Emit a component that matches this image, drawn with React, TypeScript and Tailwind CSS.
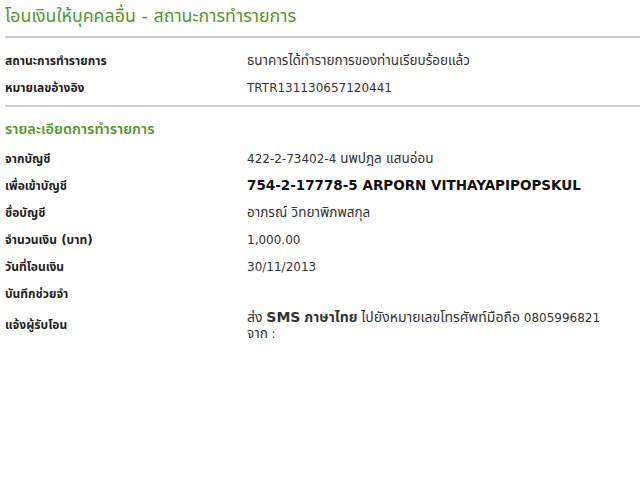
import React from "react";

const font = { fontFamily: '"DejaVu Sans", "Noto Sans", "Noto Sans Thai", Tahoma, sans-serif' };

function T({ children, size = "text-[13.5px]" }: { children: React.ReactNode; size?: string }) {
  return <span className={size}>{children}</span>;
}

function Row({ label, children, bold }: { label: string; children?: React.ReactNode; bold?: boolean }) {
  return (
    <div className="flex items-center h-[27px]">
      <div className="w-[242px] text-[12px] font-bold text-[#222]">{label}</div>
      <div className={bold ? "text-[13.5px] font-bold text-[#111]" : "text-[12px] text-[#333]"}>{children}</div>
    </div>
  );
}

export default function App() {
  return (
    <div className="w-[640px] h-[500px] bg-white pl-[5px] overflow-hidden" style={font}>
      <div className="h-[36px] pt-[4px] text-[17.8px] leading-[24px] text-[#4e9a2a]">
        โอนเงินให้บุคคลอื่น - สถานะการทำรายการ
      </div>
      <div className="h-[2px] bg-[#cccccc]" />
      <div className="h-[9px]" />
      <Row label="สถานะการทำรายการ"><T>ธนาคารได้ทำรายการของท่านเรียบร้อยแล้ว</T></Row>
      <Row label="หมายเลขอ้างอิง">TRTR131130657120441</Row>
      <div className="h-[4px]" />
      <div className="h-[2px] bg-[#cccccc]" />
      <div className="h-[13px]" />
      <div className="h-[18px] text-[14.5px] font-semibold leading-[18px] text-[#4e9a2a]">รายละเอียดการทำรายการ</div>
      <div className="h-[7px]" />
      <Row label="จากบัญชี">422-2-73402-4 <T>นพปฎล แสนอ่อน</T></Row>
      <Row label="เพื่อเข้าบัญชี" bold>754-2-17778-5 ARPORN VITHAYAPIPOPSKUL</Row>
      <Row label="ชื่อบัญชี"><T>อาภรณ์ วิทยาพิภพสกุล</T></Row>
      <Row label="จำนวนเงิน (บาท)">1,000.00</Row>
      <Row label="วันที่โอนเงิน">30/11/2013</Row>
      <Row label="บันทึกช่วยจำ"></Row>
      <div className="flex items-center h-[36px]">
        <div className="w-[242px] text-[12px] font-bold text-[#222]">แจ้งผู้รับโอน</div>
        <div className="text-[12px] leading-[15px] text-[#333] mt-[2px]">
          <div>
            <T size="text-[14px]">ส่ง</T> <span className="font-bold text-[14px]">SMS</span> <span className="font-bold text-[14px]">ภาษาไทย</span> <T size="text-[14px]">ไปยังหมายเลขโทรศัพท์มือถือ</T> 0805996821
          </div>
          <div><T>จาก</T> :</div>
        </div>
      </div>
    </div>
  );
}
